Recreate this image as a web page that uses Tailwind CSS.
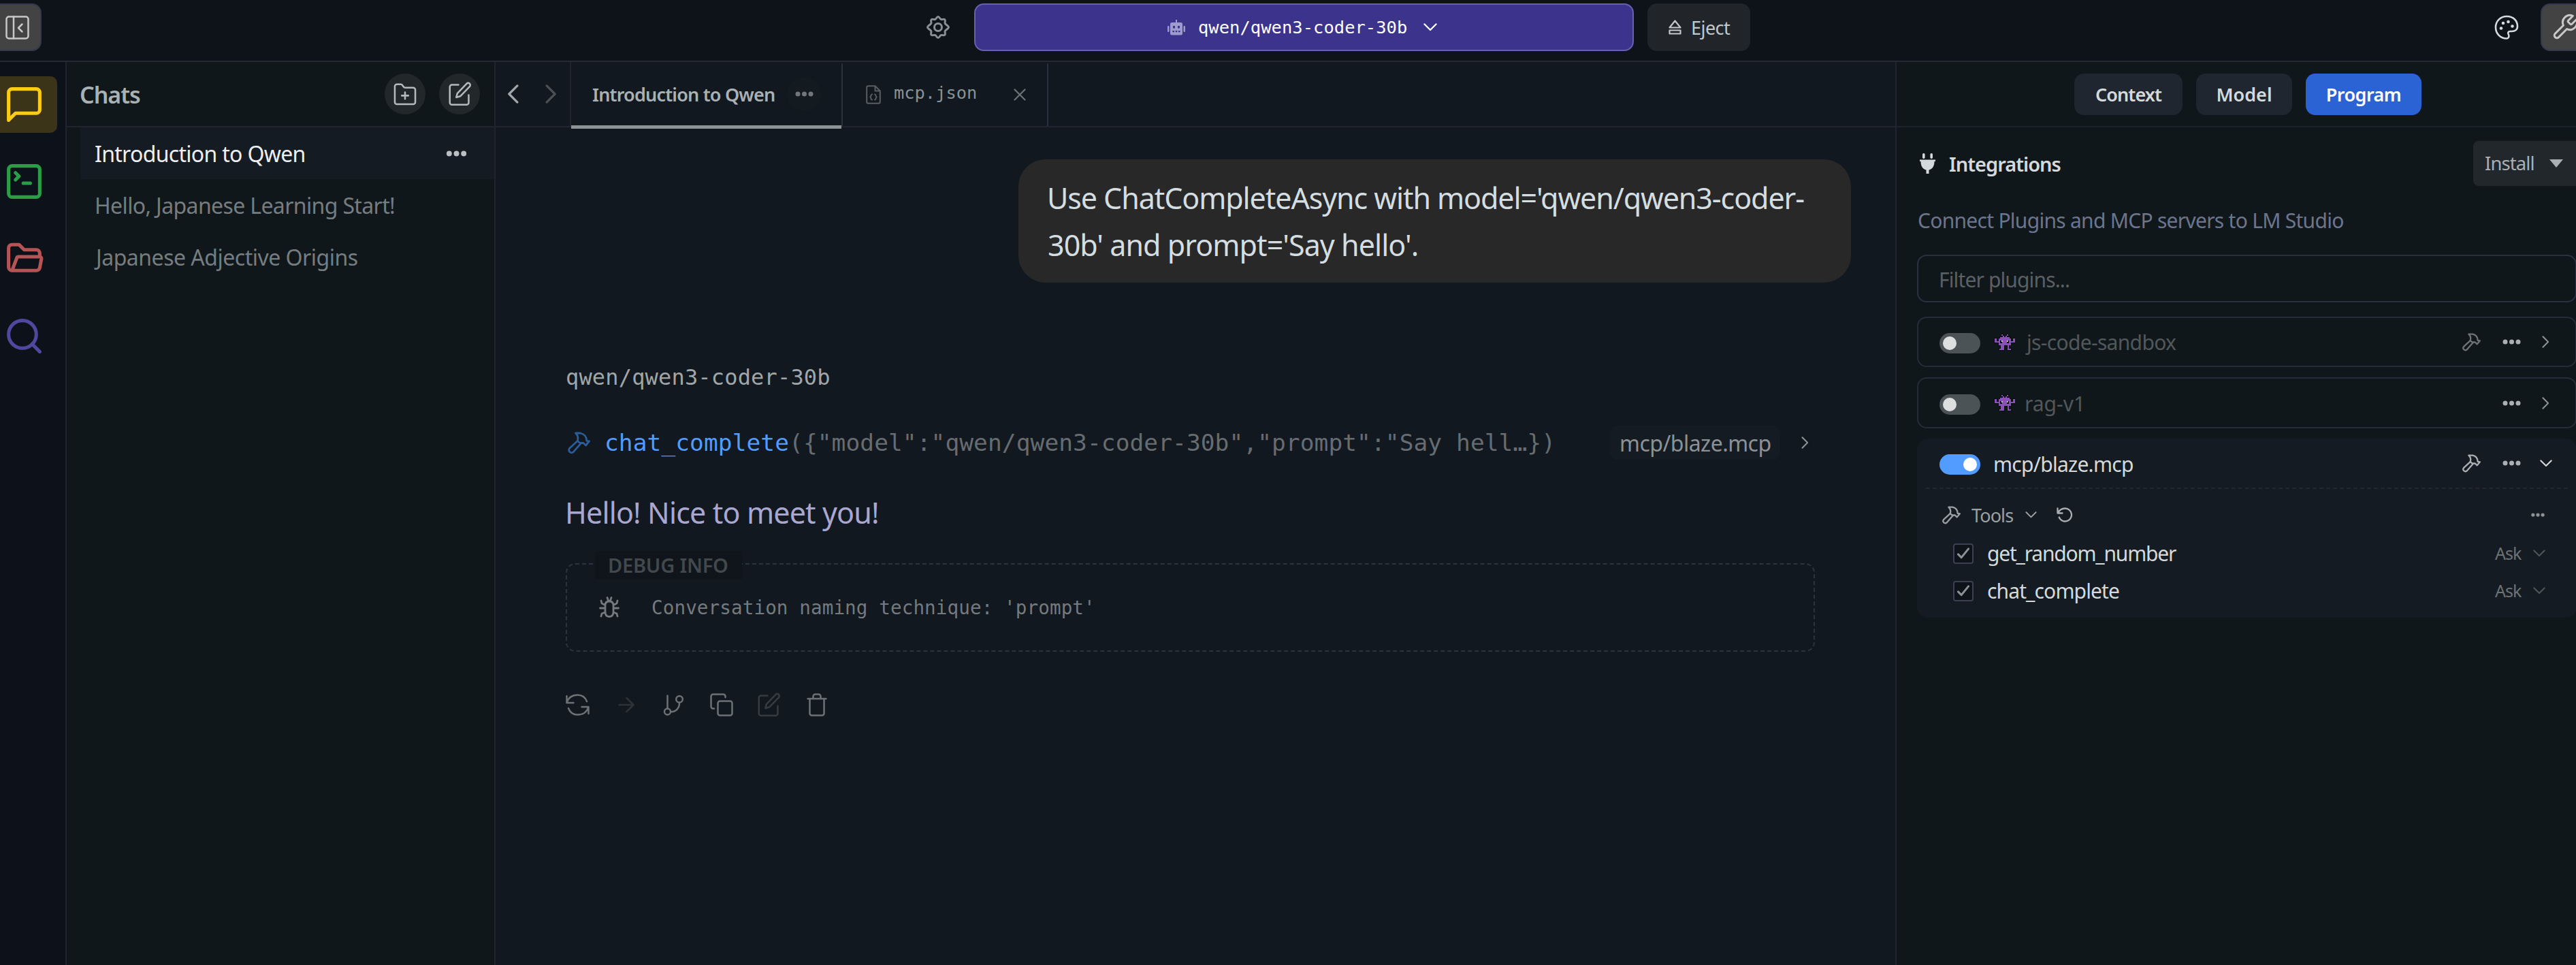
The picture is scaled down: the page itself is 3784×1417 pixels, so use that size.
<!DOCTYPE html>
<html lang="en">
<head>
<meta charset="utf-8">
<title>LM Studio</title>
<script src="https://cdn.jsdelivr.net/npm/@tailwindcss/browser@4"></script>
</head>
<body class="w-[3784px] h-[1417px] overflow-hidden bg-[#11181f] font-['Noto_Sans',sans-serif] leading-none whitespace-nowrap">
<svg class="hidden">
  <symbol id="hammer" viewBox="8 7.5 33 33"><g fill="none" stroke="currentColor" stroke-width="2.8" stroke-linejoin="round" stroke-linecap="round"><path d="M19.5 9.5H26.500Q35.500 11.500 35.700 20.800L39.600 21.300L34.500 27.500L31 24H26L22.300 21Q24.500 14 19.500 9.500z"/><path d="M22.300 21L10.600 31.800a3.900 3.900 0 0 0 5.500 5.500L27 24.800"/></g></symbol>
  <symbol id="dots" viewBox="0 0 27 8"><circle cx="4" cy="4" r="3.500" fill="currentColor"/><circle cx="13.500" cy="4" r="3.500" fill="currentColor"/><circle cx="23" cy="4" r="3.500" fill="currentColor"/></symbol>
  <symbol id="right" viewBox="0 0 12 20"><path d="M1.500 1.500L10 10L1.500 18.500" fill="none" stroke="currentColor" stroke-width="2.300" stroke-linecap="round" stroke-linejoin="round"/></symbol>
  <symbol id="down" viewBox="0 0 20 12"><path d="M1.500 1.500L10 10L18.500 1.500" fill="none" stroke="currentColor" stroke-width="2.300" stroke-linecap="round" stroke-linejoin="round"/></symbol>
  <symbol id="edit" viewBox="0 0 24 24"><g fill="none" stroke="currentColor" stroke-width="1.600" stroke-linecap="round" stroke-linejoin="round"><path d="M11 3.500H5a2 2 0 0 0-2 2V20a2 2 0 0 0 2 2h13.500a2 2 0 0 0 2-2v-7"/><path d="M18.600 2.400a1.900 1.900 0 0 1 2.800 2.700l-8.700 9-3.700 1 1-3.700z"/></g></symbol>
  <symbol id="critter" viewBox="0 0 31 25"><g fill="#8b4fb8" stroke="#05080a" stroke-width="1.400" paint-order="stroke"><path d="M11 1h2v2h2v2h2V3h2V1h2v2h-2v2h4v2h2v4h3V7h3v6h-6v4h-3v5h3v2h-5v-7h-5v7H8v-2h2v-5H7v-4H1V7h3v4h3V7h2V5h4V3h-2z"/></g><path d="M9 10h3v4H9zM19 10h3v4h-3z" fill="#05080a"/><path d="M11 10h1.500v2H11zM19 10h1.500v2H19z" fill="#dfe3e4"/></symbol>
  <symbol id="check" viewBox="0 0 20 18"><path d="M2 10.500L7 15.500L18 2" fill="none" stroke="currentColor" stroke-width="3.200" stroke-linecap="round" stroke-linejoin="round"/></symbol>
</svg>

<!-- Title bar -->
<header class="flex h-[91px] items-start border-b-2 border-[#262a35] bg-[#0e1219] pt-[5px] [&>*]:shrink-0">
  <div class="flex h-[70px] w-[61px] items-center rounded-r-[14px] border-y-2 border-r-2 border-[#333a4b] bg-[#434344] pl-2 text-[#c8c8c8]">
    <svg class="h-[35px] w-[35px]" viewBox="0 0 35 35" fill="none" stroke="currentColor" stroke-width="2.500" stroke-linecap="round" stroke-linejoin="round"><rect x="1.500" y="1.500" width="32" height="32" rx="3.500"/><path d="M12 1.500v32M24.500 12.500l-5.500 5.500l5.500 5.500"/></svg>
  </div>
  <svg class="mt-[17px] ml-[1299px] h-[36px] w-[36px] text-[#8a8f92]" viewBox="0 0 36 36" fill="none" stroke="currentColor" stroke-width="3"><path stroke-linejoin="round" d="M18 2.500c2 0 2.500 3.200 4.200 3.900s4.300-1.100 5.700.300s-.400 4 .300 5.700s5.300 3.600 5.300 5.600s-4.600 3.900-5.300 5.600s1.100 4.300-.300 5.700s-4-.400-5.700.300s-2.200 3.900-4.200 3.900s-2.500-3.200-4.200-3.900s-4.300 1.100-5.700-.300s.400-4-.300-5.700s-5.300-3.600-5.300-5.600s4.600-3.900 5.300-5.600s-1.100-4.300.300-5.700s4 .400 5.700-.300s2.200-3.900 4.200-3.900z"/><circle cx="18" cy="18" r="5.500"/></svg>
  <div class="ml-[35px] flex h-[70px] w-[969px] items-center rounded-[14px] border-2 border-[#6660b0] bg-[#3c348c] pl-[282px]">
    <svg class="h-[23px] w-[26px] shrink-0 text-[#a09bcf]" viewBox="0 0 26 23" fill="currentColor"><path d="M12 0h2v4h5.500a2.500 2.500 0 0 1 2.500 2.500V20a2.500 2.500 0 0 1-2.500 2.500h-13A2.500 2.500 0 0 1 4 20V6.500A2.500 2.500 0 0 1 6.500 4H12z"/><rect y="9" width="2.500" height="9" rx="1.200"/><rect x="23.500" y="9" width="2.500" height="9" rx="1.200"/><path fill="#3c348c" d="M8 9h3v3.500H8zM15 9h3v3.500h-3zM7.500 16h2.500v2.200H7.500zM11.800 16h2.500v2.200h-2.500zM16 16h2.500v2.200H16z"/></svg>
    <span class="ml-[19px] w-[331px] pt-px font-['DejaVu_Sans_Mono',monospace] text-[25.4px] tracking-[0.08px] text-white">qwen/qwen3-coder-30b</span>
    <svg class="h-[12px] w-[20px] text-white"><use href="#down"/></svg>
  </div>
  <div class="ml-[20px] flex h-[70px] w-[151px] items-center rounded-[14px] bg-[#212529] pl-[31px] text-[#c4c8ca]">
    <svg class="h-[22px] w-[19px] shrink-0" viewBox="0 0 19 22" fill="none" stroke="currentColor" stroke-width="2.200" stroke-linejoin="round"><path d="M9.500 1.500L17.500 11.500H1.500zM1.500 15.500h16v5h-16z"/></svg>
    <span class="ml-[14px] pt-px text-[27px] tracking-[-0.54px]">Eject</span>
  </div>
  <svg class="mt-[17px] ml-[1093px] h-[36px] w-[36px] text-[#d5dbdd]" viewBox="0 0 36 36" fill="none" stroke="currentColor" stroke-width="2.600" stroke-linejoin="round"><path d="M18 34.500C8.500 34.500 2 27 2 18S9 2 18.500 2S34 8.500 34 16.500C34 22 30 24 26 24h-2.500c-3.500 0-4 2.500-2.500 5c1.500 3-.500 5.500-3 5.500z"/><g fill="currentColor" stroke="none"><circle cx="13" cy="12" r="2.300"/><circle cx="20.500" cy="10" r="2.300"/><circle cx="26.500" cy="16.500" r="2.300"/><circle cx="10" cy="19.500" r="2.300"/></g></svg>
  <div class="ml-[32px] flex h-[70px] w-[80px] items-center rounded-l-[14px] border-2 border-[#333a4b] bg-[#434344] pl-[13px] text-[#c8c8c8]">
    <svg class="h-[42px] w-[42px]" viewBox="0 0 24 24" fill="none" stroke="currentColor" stroke-width="1.700" stroke-linecap="round" stroke-linejoin="round"><path d="M14.700 6.300a1 1 0 0 0 0 1.400l1.600 1.600a1 1 0 0 0 1.400 0l3.770-3.770a6 6 0 0 1-7.940 7.940l-6.910 6.910a2.120 2.120 0 0 1-3-3l6.910-6.910a6 6 0 0 1 7.940-7.940l-3.760 3.760z"/></svg>
  </div>
</header>

<div class="flex h-[1326px]">
  <!-- Icon rail -->
  <nav class="flex w-[98px] shrink-0 flex-col border-r-2 border-[#20242f] bg-[#0d1119]">
    <div class="mt-[21px] flex h-[83px] w-[84px] items-center rounded-r-[10px] bg-[#3b3419] pl-[5px] text-[#facc15]">
      <svg class="h-[61px] w-[61px]" viewBox="0 0 24 24" fill="none" stroke="currentColor" stroke-width="2" stroke-linecap="round" stroke-linejoin="round"><path d="M21 15a2 2 0 0 1-2 2H7l-4 4V5a2 2 0 0 1 2-2h14a2 2 0 0 1 2 2z"/></svg>
    </div>
    <svg class="mt-[41px] ml-[5px] h-[61px] w-[61px] text-[#2a9d46]" viewBox="0 0 24 24" fill="none" stroke="currentColor" stroke-width="2" stroke-linecap="round" stroke-linejoin="round"><rect x="3" y="3" width="18" height="18" rx="2"/><path d="M7 7l2 2-2 2M11.500 13h4"/></svg>
    <svg class="mt-[52px] ml-[5px] h-[61px] w-[61px] text-[#b45454]" viewBox="0 0 24 24" fill="none" stroke="currentColor" stroke-width="2" stroke-linecap="round" stroke-linejoin="round"><path d="M5 19l2.757-7.351A1 1 0 0 1 8.693 11H21a1 1 0 0 1 .986 1.164l-.996 5.211A2 2 0 0 1 19.026 19zM5 19a2 2 0 0 1-2-2V6a2 2 0 0 1 2-2h4l3 3h7a2 2 0 0 1 2 2v2"/></svg>
    <svg class="mt-[53px] ml-[5px] h-[61px] w-[61px] text-[#4e489e]" viewBox="0 0 24 24" fill="none" stroke="currentColor" stroke-width="2" stroke-linecap="round"><circle cx="11" cy="11" r="8"/><path d="M21 21l-4.350-4.350"/></svg>
  </nav>

  <!-- Chats -->
  <aside class="w-[630px] shrink-0 border-r-2 border-[#1f2430] bg-[#10171a]">
    <div class="flex h-[96px] items-center border-b-2 border-[#1f2430]">
      <span class="ml-[19px] w-[446px] pt-[2px] text-[34px] font-semibold tracking-[-1.02px] text-[#a9b1b5]">Chats</span>
      <div class="ml-[2px] flex size-[60px] items-center justify-center rounded-full bg-[#22272a] text-[#b3b9bc]">
        <svg class="h-[38px] w-[38px]" viewBox="0 0 24 24" fill="none" stroke="currentColor" stroke-width="1.600" stroke-linecap="round" stroke-linejoin="round"><path d="M4.500 21.500A2 2 0 0 1 2.500 19.500V5a2 2 0 0 1 2-2h3.400a2 2 0 0 1 1.700.900L10.500 5.200a2 2 0 0 0 1.700.900h7.300a2 2 0 0 1 2 2V19.500a2 2 0 0 1-2 2zM12 10.500v6M9 13.500h6"/></svg>
      </div>
      <div class="ml-[20px] flex size-[60px] items-center justify-center rounded-full bg-[#22272a] text-[#b3b9bc]">
        <svg class="size-[38px]"><use href="#edit"/></svg>
      </div>
    </div>
    <div class="ml-[20px] flex h-[76px] items-center bg-[#151b22]">
      <span class="ml-[21px] w-[516px] pt-px text-[32px] tracking-[-0.69px] text-[#eceff2]">Introduction to Qwen</span>
      <svg class="h-[9px] w-[31px] text-[#b9bfc3]"><use href="#dots"/></svg>
    </div>
    <div class="flex h-[76px] items-center"><span class="ml-[41px] pt-[2px] text-[32px] tracking-[-0.63px] text-[#757d80]">Hello, Japanese Learning Start!</span></div>
    <div class="flex h-[76px] items-center"><span class="ml-[43px] pt-[2px] text-[32px] tracking-[-0.5px] text-[#757d80]">Japanese Adjective Origins</span></div>
  </aside>

  <!-- Conversation -->
  <main class="w-[2056px] shrink-0">
    <div class="flex h-[96px] items-stretch border-b-2 border-[#1f2430]">
      <div class="flex w-[111px] items-center border-r-2 border-[#1f2430] pl-[17px]">
        <svg class="h-[30px] w-[17px] rotate-180 text-[#a0a6aa]"><use href="#right"/></svg>
        <svg class="ml-[39px] h-[30px] w-[17px] text-[#4a5054]"><use href="#right"/></svg>
      </div>
      <div class="-mb-[2px] flex h-[98px] w-[397px] items-center border-b-[5px] border-[#8b9396] pl-[31px]">
        <span class="w-[286px] pt-[2px] text-[27px] font-semibold tracking-[-0.81px] text-[#a9b1b5]">Introduction to Qwen</span>
        <div class="flex size-[50px] items-center justify-center rounded-full bg-[#141b20] text-[#70767a]"><svg class="h-[8px] w-[27px]"><use href="#dots"/></svg></div>
      </div>
      <div class="mt-[2px] flex w-[304px] items-center border-x-2 border-[#2b3040] pl-[34px]">
        <svg class="h-[28px] w-[22px] text-[#585d62]" viewBox="0 0 22 28" fill="none" stroke="currentColor" stroke-width="2" stroke-linejoin="round" stroke-linecap="round"><path d="M3.500 1.200h10L20.800 8.500v16a2.300 2.300 0 0 1-2.300 2.300h-15a2.300 2.300 0 0 1-2.300-2.300v-21a2.300 2.300 0 0 1 2.300-2.300zM13.500 1.200v7.300h7.300M9 13.500c-2 0-1 3-2.700 4c1.700 1 .700 4 2.700 4M13 13.500c2 0 1 3 2.700 4c-1.700 1-.700 4-2.700 4"/></svg>
        <span class="ml-[19px] w-[176px] pb-[4px] font-['DejaVu_Sans_Mono',monospace] text-[25.400px] text-[#8a9194]">mcp.json</span>
        <svg class="h-[18px] w-[18px] text-[#6d7478]" viewBox="0 0 18 18" stroke="currentColor" stroke-width="2.200" stroke-linecap="round"><path d="M1.500 1.500l15 15M16.500 1.500l-15 15"/></svg>
      </div>
    </div>

    <div class="pr-[65px]">
      <div class="mt-[47px] ml-auto h-[181px] w-[1223px] rounded-[40px] bg-[#282828] pt-[22px] pl-[42px] text-[43px] leading-[69px] text-[#d4dde0]">
        <div class="tracking-[-1.09px]">Use ChatCompleteAsync with model='qwen/qwen3-coder-</div>
        <div class="pl-px tracking-[-0.95px]">30b' and prompt='Say hello'.</div>
      </div>
    </div>

    <div class="mt-[120px] ml-[103px] w-[1835px]">
      <div class="flex h-[38px] items-center font-['DejaVu_Sans_Mono',monospace] text-[32px] tracking-[0.17px] text-[#a0a6a8]">qwen/qwen3-coder-30b</div>
      <div class="mt-[52px] flex h-[50px] items-center">
        <svg class="ml-[3px] size-[33px] text-[#2c5c99]"><use href="#hammer"/></svg>
        <span class="ml-[21px] w-[1477px] font-['DejaVu_Sans_Mono',monospace] text-[34.500px] tracking-[0.08px] text-[#666c70]"><span class="text-[#529bff]">chat_complete</span>({"model":"qwen/qwen3-coder-30b","prompt":"Say hell…})</span>
        <div class="flex h-[50px] w-[250px] shrink-0 items-center rounded-[10px] bg-[#151b22] pt-px pl-[14px] text-[32px] tracking-[-0.52px] text-[#8b9295]">mcp/blaze.mcp</div>
        <svg class="ml-[31px] h-[18px] w-[11px] shrink-0 text-[#8b9295]"><use href="#right"/></svg>
      </div>
      <div class="mt-[44px] -ml-px flex h-[66px] items-center text-[43px] tracking-[-0.85px] text-[#a9a7cf]">Hello! Nice to meet you!</div>
      <div class="relative mt-[42px] flex h-[130px] items-center rounded-[14px] border-2 border-dashed border-[#2b333e] pl-[47px]">
        <div class="absolute -top-[20px] left-[41px] flex h-[41px] w-[216px] items-center bg-[#0f151b] pl-[19px] text-[29px] font-semibold tracking-[-0.23px] text-[#42484b]">DEBUG INFO</div>
        <svg class="h-[32px] w-[30px] text-[#747a7d]" viewBox="0 0 30 32" fill="none" stroke="currentColor" stroke-width="2.800" stroke-linecap="round" stroke-linejoin="round"><path d="M15 7c4.500 0 6 2.500 6 6v9c0 5-2.500 7.500-6 7.500S9 27 9 22v-9c0-3.500 1.500-6 6-6zM12 1.500l1.500 4.500M18 1.500L16.500 6M1.500 17H9M21 17h7.500M3 6l1 4l5 2.500M27 6l-1 4l-5 2.500M3 29l1-4l5-2M27 29l-1-4l-5-2"/></svg>
        <span class="ml-[47px] pt-[2px] font-['DejaVu_Sans_Mono',monospace] text-[27.600px] tracking-[0.1px] text-[#747a7d]">Conversation naming technique: 'prompt'</span>
      </div>
      <div class="mt-[61px] flex h-[34px] items-center text-[#6b7174]">
        <svg class="h-[32px] w-[35px]" viewBox="0 0 35 32" fill="none" stroke="currentColor" stroke-width="2.500" stroke-linecap="round" stroke-linejoin="round"><path d="M1.500 3v10h10M1.500 13C4 5 10 1.500 17.500 1.500S29 5.500 31 11M33.500 29V19h-10M33.500 19C31 27 25 30.500 17.500 30.500S6 26.500 4 21"/></svg>
        <svg class="ml-[42px] h-[24px] w-[24px] text-[#2c3238]" viewBox="0 0 24 24" fill="none" stroke="currentColor" stroke-width="2.500" stroke-linecap="round" stroke-linejoin="round"><path d="M1.500 12h21M12.500 2l10 10l-10 10"/></svg>
        <svg class="ml-[42px] h-[31px] w-[30px]" viewBox="0 0 30 31" fill="none" stroke="currentColor" stroke-width="2.500" stroke-linecap="round"><path d="M6.500 1.500v19M24 12c0 8-5 13-12.500 13.300"/><circle cx="6.500" cy="25" r="4.500"/><circle cx="24" cy="6.800" r="4.800"/></svg>
        <svg class="ml-[39px] h-[34px] w-[34px]" viewBox="0 0 34 34" fill="none" stroke="currentColor" stroke-width="2.500" stroke-linecap="round" stroke-linejoin="round"><rect x="11.500" y="11.500" width="21" height="21" rx="3"/><path d="M6 22.500H4.500a3 3 0 0 1-3-3v-15a3 3 0 0 1 3-3h15a3 3 0 0 1 3 3V6"/></svg>
        <svg class="ml-[33px] size-[38px] text-[#353b3f]"><use href="#edit"/></svg>
        <svg class="ml-[37px] h-[34px] w-[30px]" viewBox="0 0 30 34" fill="none" stroke="currentColor" stroke-width="2.500" stroke-linecap="round" stroke-linejoin="round"><path d="M1.500 8h27M4.500 8v21.500a3 3 0 0 0 3 3h15a3 3 0 0 0 3-3V8M9.500 8V4.500a3 3 0 0 1 3-3h5a3 3 0 0 1 3 3V8"/></svg>
      </div>
    </div>
  </main>

  <!-- Program panel -->
  <section class="w-[1000px] shrink-0 border-l-2 border-[#1f2430] bg-[#10171a]">
    <div class="flex h-[96px] items-center gap-[20px] border-b-2 border-[#1b2229] pl-[261px] text-[27px] font-semibold text-[#d4dadc]">
      <div class="flex h-[61px] w-[159px] items-center justify-center rounded-[14px] bg-[#20262f] tracking-[-0.91px]">Context</div>
      <div class="flex h-[61px] w-[141px] items-center justify-center rounded-[14px] bg-[#20262f]">Model</div>
      <div class="flex h-[61px] w-[170px] items-center justify-center rounded-[14px] bg-[#2b62d4] tracking-[-0.55px] text-white">Program</div>
    </div>
    <div class="mt-[20px] ml-[34px] flex h-[66px] items-center [&>*]:shrink-0">
      <svg class="h-[30px] w-[23px] text-[#d4dadc]" viewBox="0 0 23 30" fill="currentColor"><rect x="4" y="0" width="3.600" height="8" rx="1.800"/><rect x="15.400" y="0" width="3.600" height="8" rx="1.800"/><path d="M0 9.500h23v2.500h-1.500c0 7-3 11.500-8 12.500v5.500h-4v-5.500c-5-1-8-5.500-8-12.500H0z"/></svg>
      <span class="ml-[20px] w-[770px] text-[29px] font-semibold tracking-[-0.99px] text-[#d4dadc]">Integrations</span>
      <div class="flex h-[66px] w-[160px] items-center rounded-[8px] bg-[#22272b] pl-[17px] text-[#a9afb2]">
        <span class="w-[95px] text-[27.500px] tracking-[-0.9px]">Install</span>
        <svg class="h-[12px] w-[20px]" viewBox="0 0 20 12"><path d="M0 0h20L10 12z" fill="currentColor"/></svg>
      </div>
    </div>
    <div class="mt-[31px] ml-[31px] flex h-[40px] items-center text-[30px] tracking-[-0.72px] text-[#6c758c]">Connect Plugins and MCP servers to LM Studio</div>
    <div class="mt-[30px] ml-[30px] flex h-[70px] w-[969px] items-center rounded-[14px] border-2 border-[#2a3042] pt-[3px] pl-[30px] text-[30px] tracking-[-0.87px] text-[#5a6063]">Filter plugins...</div>

    <div class="mt-[21px] ml-[30px] flex h-[74px] w-[969px] items-center rounded-[14px] border-2 border-[#252c38] pl-[31px]">
      <div class="mt-[4px] flex h-[30px] w-[60px] items-center rounded-full bg-[#4b5356] pl-[5px]"><div class="size-[20px] rounded-full bg-[#dcdedf]"></div></div>
      <svg class="ml-[20px] h-[25px] w-[31px]"><use href="#critter"/></svg>
      <span class="ml-[17px] w-[640px] pt-px text-[30px] tracking-[-0.68px] text-[#51585b]">js-code-sandbox</span>
      <svg class="size-[27px] shrink-0 text-[#6d7376]"><use href="#hammer"/></svg>
      <svg class="ml-[32px] h-[8px] w-[27px] shrink-0 text-[#a9afb2]"><use href="#dots"/></svg>
      <svg class="ml-[31px] h-[18px] w-[11px] shrink-0 text-[#8b9295]"><use href="#right"/></svg>
    </div>
    <div class="mt-[15px] ml-[30px] flex h-[75px] w-[969px] items-center rounded-[14px] border-2 border-[#252c38] pl-[31px]">
      <div class="mt-[4px] flex h-[30px] w-[60px] items-center rounded-full bg-[#4b5356] pl-[5px]"><div class="size-[20px] rounded-full bg-[#dcdedf]"></div></div>
      <svg class="ml-[20px] h-[25px] w-[31px]"><use href="#critter"/></svg>
      <span class="ml-[14px] w-[702px] pt-[3px] text-[30px] text-[#51585b]">rag-v1</span>
      <svg class="h-[8px] w-[27px] shrink-0 text-[#a9afb2]"><use href="#dots"/></svg>
      <svg class="ml-[31px] h-[18px] w-[11px] shrink-0 text-[#8b9295]"><use href="#right"/></svg>
    </div>

    <div class="mt-[15px] ml-[30px] h-[263px] w-[969px] rounded-[16px] bg-[#151b22]">
      <div class="mx-[13px] flex h-[74px] items-center border-b-2 border-dashed border-[#22282f] pl-[20px]">
        <div class="mt-[4px] flex h-[30px] w-[60px] items-center rounded-full bg-[#529bff] pl-[35px]"><div class="size-[20px] rounded-full bg-white"></div></div>
        <span class="ml-[19px] w-[689px] pt-[3px] text-[30px] tracking-[-0.72px] text-[#d4dadc]">mcp/blaze.mcp</span>
        <svg class="size-[27px] shrink-0 text-[#a9afb2]"><use href="#hammer"/></svg>
        <svg class="ml-[32px] h-[8px] w-[27px] shrink-0 text-[#a9afb2]"><use href="#dots"/></svg>
        <svg class="ml-[28px] h-[11px] w-[18px] shrink-0 text-[#d4dadc]"><use href="#down"/></svg>
      </div>
      <div class="mt-[20px] flex h-[36px] items-center pl-[37px] text-[#9aa0a3]">
        <svg class="size-[27px]"><use href="#hammer"/></svg>
        <span class="ml-[16px] w-[79px] text-[27px] tracking-[-0.9px]">Tools</span>
        <svg class="h-[10px] w-[17px]"><use href="#down"/></svg>
        <svg class="ml-[29px] h-[22px] w-[24px] text-[#a9afb2]" viewBox="0 0 24 22" fill="none" stroke="currentColor" stroke-width="2.300" stroke-linecap="round" stroke-linejoin="round"><path d="M1.500 1.500v7h7M2 8.500C4 4 8 1.500 12.500 1.500a9.500 9.500 0 1 1-8.800 13"/></svg>
        <svg class="ml-[672px] h-[6px] w-[22px] text-[#8b9295]"><use href="#dots"/></svg>
      </div>
      <div class="mt-[11px] flex h-[55px] items-center pl-[53px]">
        <div class="flex size-[30px] items-center justify-center rounded-[4px] border-2 border-[#3b4052] bg-[#0e1219] text-[#8b9295]"><svg class="h-[17px] w-[20px]"><use href="#check"/></svg></div>
        <span class="ml-[20px] w-[746px] text-[30px] tracking-[-1.2px] text-[#d4dadc]">get_random_number</span>
        <span class="w-[56px] text-[25px] tracking-[-1px] text-[#6d7376]">Ask</span>
        <svg class="h-[11px] w-[18px] text-[#4f565a]"><use href="#down"/></svg>
      </div>
      <div class="flex h-[55px] items-center pl-[53px]">
        <div class="flex size-[30px] items-center justify-center rounded-[4px] border-2 border-[#3b4052] bg-[#0e1219] text-[#8b9295]"><svg class="h-[17px] w-[20px]"><use href="#check"/></svg></div>
        <span class="ml-[20px] w-[746px] text-[30px] tracking-[-0.87px] text-[#d4dadc]">chat_complete</span>
        <span class="w-[56px] text-[25px] tracking-[-1px] text-[#6d7376]">Ask</span>
        <svg class="h-[11px] w-[18px] text-[#4f565a]"><use href="#down"/></svg>
      </div>
    </div>
  </section>
</div>
</body>
</html>
